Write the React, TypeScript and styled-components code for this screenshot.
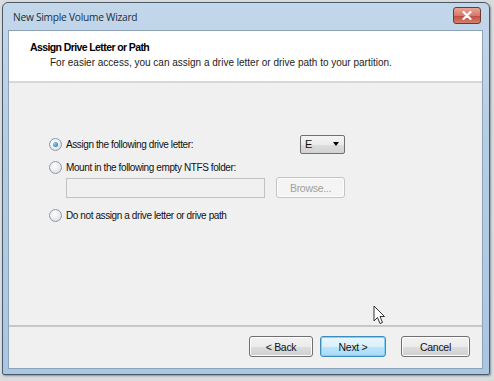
import React from "react";
import styled, { createGlobalStyle } from "styled-components";

const GlobalStyle = createGlobalStyle`
  html, body {
    margin: 0;
    padding: 0;
    background: #d9dcdf;
  }
  body {
    font-family: "Liberation Sans", Arial, sans-serif;
  }
`;

const Screen = styled.div`
  width: 494px;
  height: 381px;
  padding: 2px 4px 6px 2px;
  box-sizing: border-box;
  position: relative;
`;

const Window = styled.div`
  width: 100%;
  height: 100%;
  box-sizing: border-box;
  border: 1px solid #4d5866;
  border-radius: 6px 6px 2px 2px;
  background: linear-gradient(180deg, #c3d7ea 0%, #b4cde4 40%, #a9c6e2 100%);
  padding: 0 6px 5px 5px;
  display: flex;
  flex-direction: column;
  box-shadow: 1px 1px 2px rgba(0, 0, 0, 0.35);
`;

const TitleBar = styled.div`
  height: 27px;
  display: flex;
  align-items: center;
  justify-content: space-between;
  padding-left: 5px;
  font-family: "Open Sans", "Noto Sans", sans-serif;
  font-size: 10.2px;
  letter-spacing: -0.25px;
  color: #1e2c3c;
`;

const CloseButton = styled.div`
  width: 26px;
  height: 15px;
  margin-right: 2px;
  margin-top: -2px;
  border: 1px solid #6b3a34;
  border-radius: 3px;
  background: linear-gradient(180deg, #e7a597 0%, #d8796a 50%, #c24f3f 55%, #d4806f 100%);
  display: flex;
  align-items: center;
  justify-content: center;
`;

const Client = styled.div`
  flex: 1;
  display: flex;
  flex-direction: column;
  background: #f0f0f0;
  border: 1px solid #8ea3b8;
`;

const Header = styled.div`
  background: #ffffff;
  height: 52px;
  padding: 8px 0 0 21px;
  box-sizing: border-box;
  border-bottom: 2px solid #d8d8d8;
  color: #000;
`;

const HeaderTitle = styled.div`
  font-weight: bold;
  font-size: 10.5px;
  letter-spacing: -0.6px;
  line-height: 16px;
`;

const HeaderSub = styled.div`
  padding-left: 20px;
  font-size: 10px;
  line-height: 16px;
  color: #222;
`;

const Body = styled.div`
  flex: 1;
  padding: 51px 0 0 40px;
  font-size: 10px;
  letter-spacing: -0.4px;
  color: #111;
  position: relative;
`;

const OptionRow = styled.div<{ $gap?: number }>`
  display: flex;
  align-items: center;
  height: 20px;
  margin-top: ${(p) => p.$gap ?? 0}px;
`;

const RadioDot = styled.span<{ $checked?: boolean }>`
  width: 11px;
  height: 11px;
  border-radius: 50%;
  border: 1px solid #8f9aa5;
  background: radial-gradient(circle at 40% 35%, #ffffff 0%, #e6e9ec 60%, #cfd4d9 100%);
  display: inline-flex;
  align-items: center;
  justify-content: center;
  margin-right: 4px;
  flex-shrink: 0;
  &::after {
    content: "";
    width: 5px;
    height: 5px;
    border-radius: 50%;
    background: ${(p) =>
      p.$checked ? "radial-gradient(circle at 35% 35%, #8fd0f4, #1b6aa5)" : "transparent"};
  }
`;

const Label = styled.span`
  flex: 1;
`;

const Select = styled.div`
  width: 45px;
  height: 19px;
  box-sizing: border-box;
  margin-right: 137px;
  border: 1px solid #707070;
  border-radius: 2px;
  background: linear-gradient(180deg, #f4f4f4 0%, #ebebeb 50%, #dddddd 51%, #d2d2d2 100%);
  display: flex;
  align-items: center;
  justify-content: space-between;
  padding: 0 5px 0 4px;
  font-size: 11px;
`;

const Arrow = styled.span`
  width: 0;
  height: 0;
  border-left: 3.5px solid transparent;
  border-right: 3.5px solid transparent;
  border-top: 4px solid #000;
`;

const FolderRow = styled.div`
  display: flex;
  align-items: center;
  gap: 11px;
  margin-left: 17px;
`;

const TextBox = styled.div`
  width: 199px;
  height: 20px;
  box-sizing: border-box;
  border: 1px solid #c2c2c2;
  background: #f0f0f0;
`;

const Button = styled.div<{ $disabled?: boolean; $default?: boolean; $width?: number; $push?: number }>`
  width: ${(p) => p.$width ?? 66}px;
  height: 21px;
  margin-left: ${(p) => p.$push ?? 0}px;
  box-sizing: border-box;
  border: 1px solid ${(p) => (p.$disabled ? "#c4c4c4" : p.$default ? "#3c8dbd" : "#707070")};
  border-radius: 3px;
  display: flex;
  align-items: center;
  justify-content: center;
  font-size: 10.5px;
  letter-spacing: -0.3px;
  color: ${(p) => (p.$disabled ? "#a0a0a0" : "#111")};
  background: ${(p) =>
    p.$disabled
      ? "#f4f4f4"
      : p.$default
      ? "linear-gradient(180deg, #eaf6fd 0%, #d9f0fc 50%, #bee6fd 51%, #a7d9f5 100%)"
      : "linear-gradient(180deg, #f2f2f2 0%, #ebebeb 50%, #dddddd 51%, #cfcfcf 100%)"};
  box-shadow: ${(p) => (p.$default ? "inset 0 0 0 1px #7fd0f4" : "inset 0 0 0 1px #fcfcfc")};
`;

const Footer = styled.div`
  height: 43px;
  border-top: 2px solid #c8c8c8;
  box-sizing: border-box;
  display: flex;
  align-items: center;
  justify-content: flex-end;
  padding: 0 12px 2px 0;
  gap: 7px;
`;

const Cursor = styled.svg`
  position: absolute;
  left: 364px;
  top: 222px;
`;

export default function App() {
  return (
    <>
      <GlobalStyle />
      <Screen>
        <Window>
          <TitleBar>
            <span>New Simple Volume Wizard</span>
            <CloseButton>
              <svg width="10" height="9" viewBox="0 0 10 9">
                <path d="M1.5 1 L8.5 8 M8.5 1 L1.5 8" stroke="#fff" strokeWidth="2.2" strokeLinecap="round" />
              </svg>
            </CloseButton>
          </TitleBar>
          <Client>
            <Header>
              <HeaderTitle>Assign Drive Letter or Path</HeaderTitle>
              <HeaderSub>
                For easier access, you can assign a drive letter or drive path to your partition.
              </HeaderSub>
            </Header>
            <Body>
              <OptionRow>
                <RadioDot $checked />
                <Label>Assign the following drive letter:</Label>
                <Select>
                  <span>E</span>
                  <Arrow />
                </Select>
              </OptionRow>
              <OptionRow $gap={3}>
                <RadioDot />
                <Label>Mount in the following empty NTFS folder:</Label>
              </OptionRow>
              <FolderRow>
                <TextBox />
                <Button $disabled $width={69}>
                  Browse...
                </Button>
              </FolderRow>
              <OptionRow $gap={7}>
                <RadioDot />
                <Label>Do not assign a drive letter or drive path</Label>
              </OptionRow>
              <Cursor width="13" height="20" viewBox="0 0 13 20">
                <path
                  d="M1 1 L1 16 L4.5 12.5 L7 18.5 L9.5 17.5 L7 11.5 L11.5 11.5 Z"
                  fill="#fff"
                  stroke="#333"
                  strokeWidth="1"
                  strokeLinejoin="round"
                />
              </Cursor>
            </Body>
            <Footer>
              <Button $width={64}>&lt; Back</Button>
              <Button $default>Next &gt;</Button>
              <Button $width={69} $push={8}>
                Cancel
              </Button>
            </Footer>
          </Client>
        </Window>
      </Screen>
    </>
  );
}
